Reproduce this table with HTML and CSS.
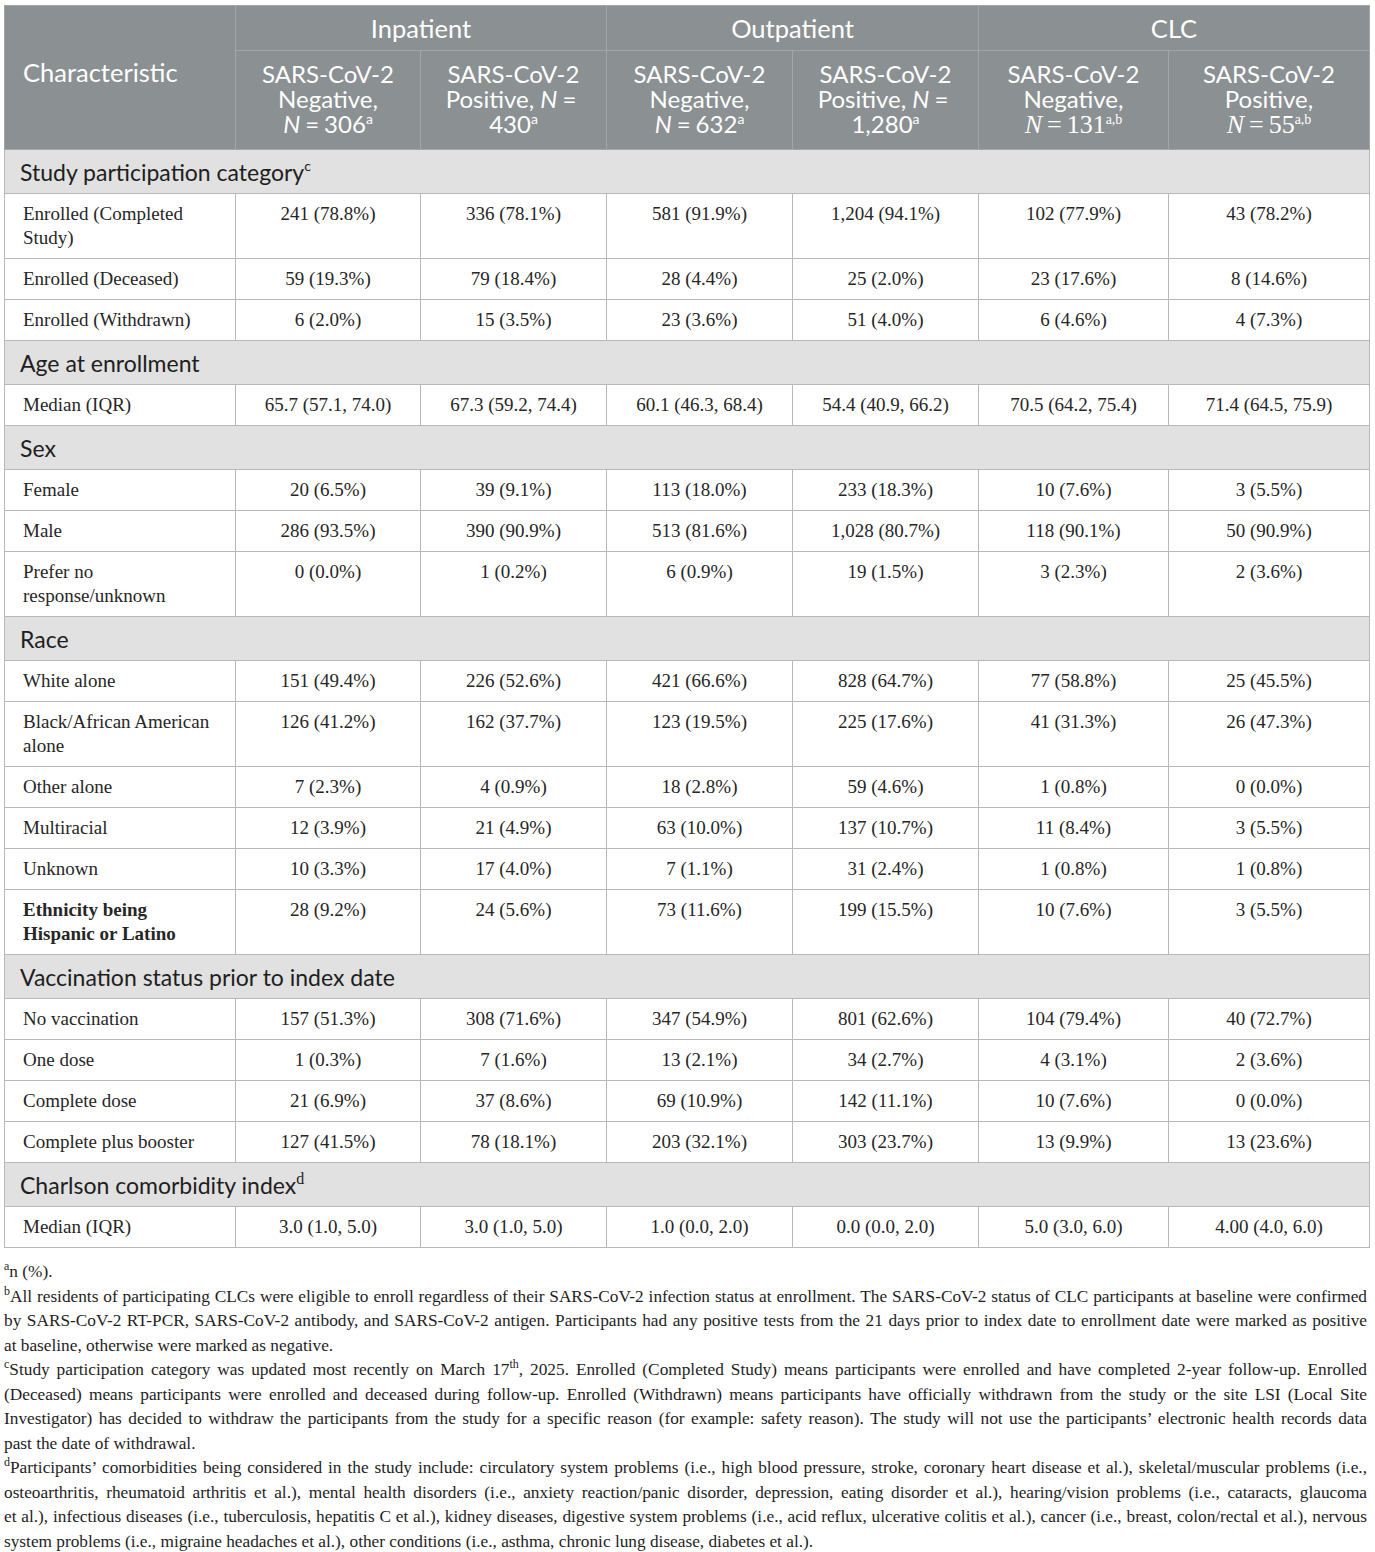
FILE: index.html
```html
<!DOCTYPE html>
<html lang="en">
<head>
<meta charset="utf-8">
<title>Table</title>
<link rel="stylesheet" href="styles.css">
</head>
<body>
<div class="page">
<table class="tbl">
<colgroup>
<col class="c0"><col class="c1"><col class="c2"><col class="c3"><col class="c4"><col class="c5"><col class="c6">
</colgroup>
<thead>
<tr>
<th rowspan="2" class="hchar">Characteristic</th>
<th colspan="2" class="hgrp">Inpatient</th>
<th colspan="2" class="hgrp">Outpatient</th>
<th colspan="2" class="hgrp">CLC</th>
</tr>
<tr>
<th class="hsub">SARS-CoV-2<br>Negative,<br><i>N</i><span class="eq">=</span>306<sup>a</sup></th>
<th class="hsub">SARS-CoV-2<br>Positive, <i>N</i><span class="eq">=</span><br>430<sup>a</sup></th>
<th class="hsub">SARS-CoV-2<br>Negative,<br><i>N</i><span class="eq">=</span>632<sup>a</sup></th>
<th class="hsub">SARS-CoV-2<br>Positive, <i>N</i><span class="eq">=</span><br>1,280<sup>a</sup></th>
<th class="hsub">SARS-CoV-2<br>Negative,<br><span class="ser"><i>N</i><span class="eq">=</span>131<sup>a,b</sup></span></th>
<th class="hsub">SARS-CoV-2<br>Positive,<br><span class="ser"><i>N</i><span class="eq">=</span>55<sup>a,b</sup></span></th>
</tr>
</thead>
<tbody>
<tr class="sec"><td colspan="7">Study participation category<sup>c</sup></td></tr>
<tr><td>Enrolled (Completed Study)</td><td>241 (78.8%)</td><td>336 (78.1%)</td><td>581 (91.9%)</td><td>1,204 (94.1%)</td><td>102 (77.9%)</td><td>43 (78.2%)</td></tr>
<tr><td>Enrolled (Deceased)</td><td>59 (19.3%)</td><td>79 (18.4%)</td><td>28 (4.4%)</td><td>25 (2.0%)</td><td>23 (17.6%)</td><td>8 (14.6%)</td></tr>
<tr><td>Enrolled (Withdrawn)</td><td>6 (2.0%)</td><td>15 (3.5%)</td><td>23 (3.6%)</td><td>51 (4.0%)</td><td>6 (4.6%)</td><td>4 (7.3%)</td></tr>
<tr class="sec"><td colspan="7">Age at enrollment</td></tr>
<tr><td>Median (IQR)</td><td>65.7 (57.1, 74.0)</td><td>67.3 (59.2, 74.4)</td><td>60.1 (46.3, 68.4)</td><td>54.4 (40.9, 66.2)</td><td>70.5 (64.2, 75.4)</td><td>71.4 (64.5, 75.9)</td></tr>
<tr class="sec"><td colspan="7">Sex</td></tr>
<tr><td>Female</td><td>20 (6.5%)</td><td>39 (9.1%)</td><td>113 (18.0%)</td><td>233 (18.3%)</td><td>10 (7.6%)</td><td>3 (5.5%)</td></tr>
<tr><td>Male</td><td>286 (93.5%)</td><td>390 (90.9%)</td><td>513 (81.6%)</td><td>1,028 (80.7%)</td><td>118 (90.1%)</td><td>50 (90.9%)</td></tr>
<tr><td>Prefer no response/unknown</td><td>0 (0.0%)</td><td>1 (0.2%)</td><td>6 (0.9%)</td><td>19 (1.5%)</td><td>3 (2.3%)</td><td>2 (3.6%)</td></tr>
<tr class="sec"><td colspan="7">Race</td></tr>
<tr><td>White alone</td><td>151 (49.4%)</td><td>226 (52.6%)</td><td>421 (66.6%)</td><td>828 (64.7%)</td><td>77 (58.8%)</td><td>25 (45.5%)</td></tr>
<tr><td>Black/African American alone</td><td>126 (41.2%)</td><td>162 (37.7%)</td><td>123 (19.5%)</td><td>225 (17.6%)</td><td>41 (31.3%)</td><td>26 (47.3%)</td></tr>
<tr><td>Other alone</td><td>7 (2.3%)</td><td>4 (0.9%)</td><td>18 (2.8%)</td><td>59 (4.6%)</td><td>1 (0.8%)</td><td>0 (0.0%)</td></tr>
<tr><td>Multiracial</td><td>12 (3.9%)</td><td>21 (4.9%)</td><td>63 (10.0%)</td><td>137 (10.7%)</td><td>11 (8.4%)</td><td>3 (5.5%)</td></tr>
<tr><td>Unknown</td><td>10 (3.3%)</td><td>17 (4.0%)</td><td>7 (1.1%)</td><td>31 (2.4%)</td><td>1 (0.8%)</td><td>1 (0.8%)</td></tr>
<tr><td class="b">Ethnicity being<br>Hispanic or Latino</td><td>28 (9.2%)</td><td>24 (5.6%)</td><td>73 (11.6%)</td><td>199 (15.5%)</td><td>10 (7.6%)</td><td>3 (5.5%)</td></tr>
<tr class="sec"><td colspan="7">Vaccination status prior to index date</td></tr>
<tr><td>No vaccination</td><td>157 (51.3%)</td><td>308 (71.6%)</td><td>347 (54.9%)</td><td>801 (62.6%)</td><td>104 (79.4%)</td><td>40 (72.7%)</td></tr>
<tr><td>One dose</td><td>1 (0.3%)</td><td>7 (1.6%)</td><td>13 (2.1%)</td><td>34 (2.7%)</td><td>4 (3.1%)</td><td>2 (3.6%)</td></tr>
<tr><td>Complete dose</td><td>21 (6.9%)</td><td>37 (8.6%)</td><td>69 (10.9%)</td><td>142 (11.1%)</td><td>10 (7.6%)</td><td>0 (0.0%)</td></tr>
<tr><td>Complete plus booster</td><td>127 (41.5%)</td><td>78 (18.1%)</td><td>203 (32.1%)</td><td>303 (23.7%)</td><td>13 (9.9%)</td><td>13 (23.6%)</td></tr>
<tr class="sec"><td colspan="7">Charlson comorbidity index<sup class="sd">d</sup></td></tr>
<tr><td>Median (IQR)</td><td>3.0 (1.0, 5.0)</td><td>3.0 (1.0, 5.0)</td><td>1.0 (0.0, 2.0)</td><td>0.0 (0.0, 2.0)</td><td>5.0 (3.0, 6.0)</td><td>4.00 (4.0, 6.0)</td></tr>
</tbody>
</table>
<div class="notes">
<p><span class="last"><sup>a</sup>n (%).</span></p>
<p><span class="ln"><sup>b</sup>All residents of participating CLCs were eligible to enroll regardless of their SARS-CoV-2 infection status at enrollment. The SARS-CoV-2 status of CLC participants at baseline were confirmed</span>
<span class="ln">by SARS-CoV-2 RT-PCR, SARS-CoV-2 antibody, and SARS-CoV-2 antigen. Participants had any positive tests from the 21 days prior to index date to enrollment date were marked as positive</span>
<span class="last">at baseline, otherwise were marked as negative.</span></p>
<p><span class="ln"><sup>c</sup>Study participation category was updated most recently on March 17<sup>th</sup>, 2025. Enrolled (Completed Study) means participants were enrolled and have completed 2-year follow-up. Enrolled</span>
<span class="ln">(Deceased) means participants were enrolled and deceased during follow-up. Enrolled (Withdrawn) means participants have officially withdrawn from the study or the site LSI (Local Site</span>
<span class="ln">Investigator) has decided to withdraw the participants from the study for a specific reason (for example: safety reason). The study will not use the participants’ electronic health records data</span>
<span class="last">past the date of withdrawal.</span></p>
<p><span class="ln"><sup>d</sup>Participants’ comorbidities being considered in the study include: circulatory system problems (i.e., high blood pressure, stroke, coronary heart disease et al.), skeletal/muscular problems (i.e.,</span>
<span class="ln">osteoarthritis, rheumatoid arthritis et al.), mental health disorders (i.e., anxiety reaction/panic disorder, depression, eating disorder et al.), hearing/vision problems (i.e., cataracts, glaucoma</span>
<span class="ln">et al.), infectious diseases (i.e., tuberculosis, hepatitis C et al.), kidney diseases, digestive system problems (i.e., acid reflux, ulcerative colitis et al.), cancer (i.e., breast, colon/rectal et al.), nervous</span>
<span class="last">system problems (i.e., migraine headaches et al.), other conditions (i.e., asthma, chronic lung disease, diabetes et al.).</span></p>
</div>
</div>
</body>
</html>
```
FILE: styles.css
```css
html, body {
  margin: 0;
  padding: 0;
  background: #ffffff;
}
.page {
  padding: 5px 6px 0 4px;
  font-family: "Liberation Serif", "Times New Roman", serif;
  color: #222222;
}
.tbl {
  width: 1365px;
  border-collapse: collapse;
  table-layout: fixed;
  border: 1px solid #c4c4c4;
}
.c0 { width: 231px; }
.c1 { width: 185px; }
.c2 { width: 186px; }
.c3 { width: 186px; }
.c4 { width: 186px; }
.c5 { width: 190px; }
.c6 { width: 201px; }

.tbl th {
  background: #8b9092;
  color: #ffffff;
  font-family: Lato, "Open Sans", sans-serif;
  font-weight: 400;
  font-size: 24px;
  line-height: 25px;
  border: 1px solid #a3a6a8;
  text-align: center;
  white-space: nowrap;
}
.tbl th.hchar {
  text-align: left;
  padding: 0 16px 10px 18px;
  vertical-align: middle;
  font-size: 25.5px;
}
.tbl th.hgrp {
  padding: 9px 8px 9px;
  height: 26px;
  font-size: 25.5px;
}
.tbl th.hsub {
  padding: 10px 4px 12px;
  vertical-align: top;
}
.tbl th i {
  font-style: italic;
}
.eq {
  margin: 0 5px;
}
.tbl th sup {
  font-size: 14px;
  line-height: 0;
  vertical-align: 9px;
}
.ser {
  font-family: "Liberation Serif", "Times New Roman", serif;
  font-size: 26px;
}
.ser sup {
  font-size: 17px;
}

.tbl td {
  font-size: 19px;
  line-height: 24px;
  padding: 8px 10px 8px;
  border: 1px solid #b8b8b8;
  text-align: center;
  vertical-align: top;
  color: #262626;
}
.tbl td:first-child {
  text-align: left;
  padding-left: 18px;
  padding-right: 10px;
}
.tbl td.b {
  font-weight: 700;
}
.tbl tr.sec td {
  background: #e0e1e0;
  font-family: Lato, "Open Sans", sans-serif;
  font-size: 23px;
  line-height: 26px;
  padding: 9px 15px 8px;
  text-align: left;
  color: #1e1e1e;
}
.tbl tr.sec sup {
  font-size: 14px;
  line-height: 0;
  vertical-align: 10px;
}
.tbl tr.sec sup.sd {
  font-family: "Liberation Serif", serif;
  font-size: 16px;
}

.notes {
  margin-top: 12px;
  padding-right: 2px;
  font-size: 17.3px;
  line-height: 24.5px;
  color: #1e1e1e;
}
.notes p {
  margin: 0;
}
.notes .ln {
  display: block;
  white-space: nowrap;
  text-align: justify;
  text-align-last: justify;
}
.notes .last {
  display: block;
  text-align: left;
}
.notes sup {
  font-size: 12px;
  line-height: 0;
  vertical-align: 7px;
}
```
